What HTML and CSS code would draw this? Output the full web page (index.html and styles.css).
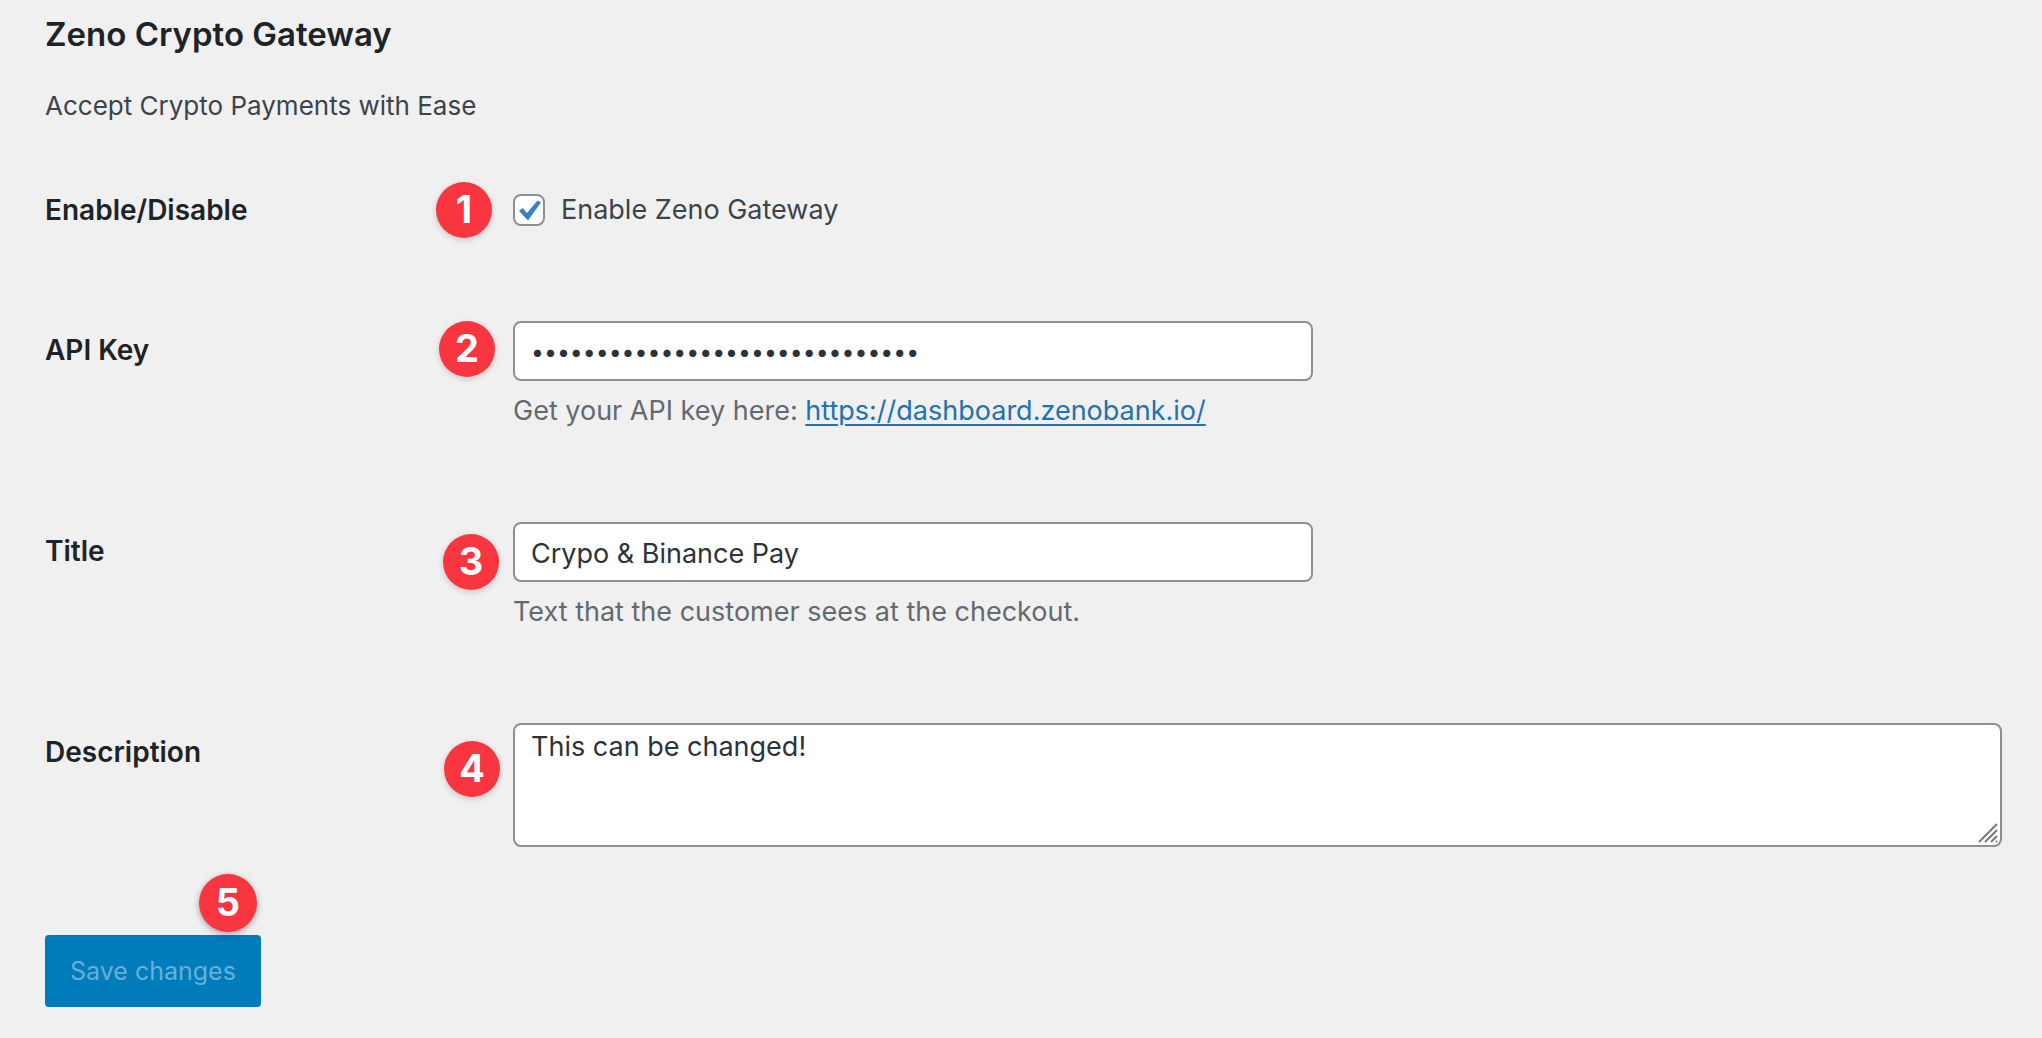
FILE: index.html
```html
<!DOCTYPE html>
<html lang="en">
<head>
    <meta charset="UTF-8">
    <meta name="viewport" content="width=device-width, initial-scale=1.0">
    <title>Zeno Crypto Gateway</title>
    <link rel="stylesheet" href="styles.css">
</head>
<body>
    <form class="settings">
        <h1>Zeno Crypto Gateway</h1>
        <p class="intro">Accept Crypto Payments with Ease</p>

        <div class="row row-check">
            <span class="row-title">Enable/Disable</span>
            <div class="field">
                <span class="step step-1">1</span>
                <label class="check" for="enabled">
                    <span class="tick">
                        <input type="checkbox" id="enabled" checked>
                        <svg viewBox="0 0 32 32" aria-hidden="true"><path d="M6 17 L9.500 14 L14 19 L24.500 6.500 L28 8.500 L15 26.500 Z"/></svg>
                    </span>
                    Enable Zeno Gateway
                </label>
            </div>
        </div>

        <div class="row">
            <label class="row-title" for="api-key">API Key</label>
            <div class="field">
                <span class="step step-2">2</span>
                <input type="password" id="api-key" value="000000000000000000000000000000">
                <p class="help">Get your API key here: <a href="https://dashboard.zenobank.io/">https://dashboard.zenobank.io/</a></p>
            </div>
        </div>

        <div class="row">
            <label class="row-title" for="title">Title</label>
            <div class="field">
                <span class="step step-3">3</span>
                <input type="text" id="title" value="Crypo &amp; Binance Pay">
                <p class="help">Text that the customer sees at the checkout.</p>
            </div>
        </div>

        <div class="row">
            <label class="row-title" for="description">Description</label>
            <div class="field">
                <span class="step step-4">4</span>
                <textarea id="description">This can be changed!</textarea>
                <svg class="grip" viewBox="0 0 20 20" aria-hidden="true"><path d="M1 19 L19 1 M7 19 L19 7 M13 19 L19 13 M18 19 L19 18"/></svg>
            </div>
        </div>

        <div class="submit">
            <span class="step step-5">5</span>
            <button type="submit" disabled>Save changes</button>
        </div>
    </form>
</body>
</html>
```
FILE: styles.css
```css
* {
    box-sizing: border-box;
}
body {
    margin: 0;
    background-color: #f0f0f0;
    color: #3c434a;
    font-family: Inter, "Liberation Sans", sans-serif;
    font-size: 27px;
    line-height: 40px;
}
.settings {
    padding: 14px 40px 32px 45px;
}
h1 {
    margin: 0;
    color: #1d2327;
    font-size: 33px;
    font-weight: 600;
    line-height: 40px;
}
.intro {
    margin: 32px 0 64px;
    font-size: 26px;
}
.row {
    display: grid;
    grid-template-columns: 468px 1fr;
    min-height: 201px;
}
.row-check {
    min-height: 131px;
}
.row-title {
    align-self: start;
    padding-top: 9px;
    color: #1d2327;
    font-size: 28px;
    font-weight: 600;
}
.row-check .row-title {
    padding-top: 0;
}
.field,
.submit {
    position: relative;
}
.check {
    display: flex;
    align-items: center;
    gap: 16px;
    width: fit-content;
}
.tick {
    position: relative;
    display: flex;
}
.tick input {
    appearance: none;
    width: 32px;
    height: 32px;
    margin: 0;
    border: 2px solid #8c8f94;
    border-radius: 8px;
    background-color: #fff;
}
.tick svg {
    position: absolute;
    inset: 0;
    display: none;
    fill: #3582c4;
    pointer-events: none;
}
.tick input:checked + svg {
    display: block;
}
input[type="text"],
input[type="password"],
textarea {
    display: block;
    border: 2px solid #8c8f94;
    border-radius: 8px;
    background-color: #fff;
    color: #2c3338;
    font-family: inherit;
    font-size: 27px;
}
input[type="text"],
input[type="password"] {
    width: 800px;
    max-width: 100%;
    height: 60px;
    padding: 2px 16px 0;
}
input[type="password"] {
    font-size: 23px;
}
textarea {
    width: 100%;
    height: 124px;
    padding: 2px 16px;
    line-height: 40px;
    resize: none;
}
.grip {
    position: absolute;
    top: 100px;
    right: 4px;
    width: 20px;
    height: 20px;
    fill: none;
    stroke: #777;
    stroke-width: 2;
}
.help {
    margin: 10px 0 0;
    color: #646970;
}
.help a {
    color: #2271b1;
    text-underline-offset: 4px;
    text-decoration-thickness: 2px;
}
.submit {
    width: fit-content;
    margin-top: 11px;
}
button {
    display: block;
    height: 72px;
    padding: 0 25px;
    border: 0;
    border-radius: 4px;
    background-color: #007cba;
    color: #66b0da;
    font-family: inherit;
    font-size: 25px;
}

/* numbered markers */
.step {
    position: absolute;
    display: flex;
    align-items: center;
    justify-content: center;
    width: 56px;
    height: 56px;
    padding-bottom: 2px;
    border-radius: 50%;
    background-color: #f93540;
    box-shadow: 0 2px 6px rgba(0, 0, 0, 0.18);
    color: #fff;
    font-size: 38px;
    font-weight: 700;
}
.step-1 {
    top: -8px;
    left: -77px;
}
.step-2 {
    top: 0;
    left: -74px;
}
.step-3 {
    top: 12px;
    left: -70px;
}
.step-4 {
    top: 18px;
    left: -69px;
}
.step-5 {
    top: -61px;
    right: 4px;
    width: 58px;
    height: 58px;
    box-shadow: 0 2px 6px rgba(0, 0, 0, 0.35);
}
```
